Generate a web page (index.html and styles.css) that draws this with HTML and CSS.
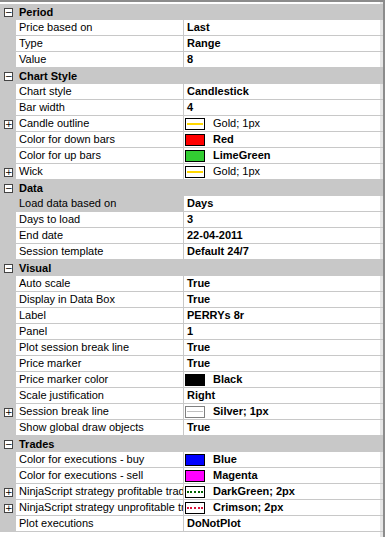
FILE: index.html
```html
<!DOCTYPE html>
<html lang="en">
<head>
  <meta charset="UTF-8" />
  <title>Properties</title>
  <link rel="stylesheet" href="styles.css">
</head>
<body>
<div class="grid">

  <div class="cat"><span class="box">&minus;</span><span class="cat-name">Period</span></div>
  <div class="row"><span class="gut"></span><span class="lbl">Price based on</span><span class="val">Last</span></div>
  <div class="row"><span class="gut"></span><span class="lbl">Type</span><span class="val">Range</span></div>
  <div class="row"><span class="gut"></span><span class="lbl">Value</span><span class="val">8</span></div>

  <div class="cat"><span class="box">&minus;</span><span class="cat-name">Chart Style</span></div>
  <div class="row"><span class="gut"></span><span class="lbl">Chart style</span><span class="val">Candlestick</span></div>
  <div class="row"><span class="gut"></span><span class="lbl">Bar width</span><span class="val">4</span></div>
  <div class="row"><span class="gut"><span class="box">+</span></span><span class="lbl">Candle outline</span><span class="val"><span class="sw line gold"></span><span class="plain">Gold; 1px</span></span></div>
  <div class="row"><span class="gut"></span><span class="lbl">Color for down bars</span><span class="val"><span class="sw red"></span>Red</span></div>
  <div class="row"><span class="gut"></span><span class="lbl">Color for up bars</span><span class="val"><span class="sw lime"></span>LimeGreen</span></div>
  <div class="row"><span class="gut"><span class="box">+</span></span><span class="lbl">Wick</span><span class="val"><span class="sw line gold"></span><span class="plain">Gold; 1px</span></span></div>

  <div class="cat"><span class="box">&minus;</span><span class="cat-name">Data</span></div>
  <div class="row"><span class="gut"></span><span class="lbl selected">Load data based on</span><span class="val">Days</span></div>
  <div class="row"><span class="gut"></span><span class="lbl">Days to load</span><span class="val">3</span></div>
  <div class="row"><span class="gut"></span><span class="lbl">End date</span><span class="val">22-04-2011</span></div>
  <div class="row"><span class="gut"></span><span class="lbl">Session template</span><span class="val">Default 24/7</span></div>

  <div class="cat"><span class="box">&minus;</span><span class="cat-name">Visual</span></div>
  <div class="row"><span class="gut"></span><span class="lbl">Auto scale</span><span class="val">True</span></div>
  <div class="row"><span class="gut"></span><span class="lbl">Display in Data Box</span><span class="val">True</span></div>
  <div class="row"><span class="gut"></span><span class="lbl">Label</span><span class="val">PERRYs 8r</span></div>
  <div class="row"><span class="gut"></span><span class="lbl">Panel</span><span class="val">1</span></div>
  <div class="row"><span class="gut"></span><span class="lbl">Plot session break line</span><span class="val">True</span></div>
  <div class="row"><span class="gut"></span><span class="lbl">Price marker</span><span class="val">True</span></div>
  <div class="row"><span class="gut"></span><span class="lbl">Price marker color</span><span class="val"><span class="sw black"></span>Black</span></div>
  <div class="row"><span class="gut"></span><span class="lbl">Scale justification</span><span class="val">Right</span></div>
  <div class="row"><span class="gut"><span class="box">+</span></span><span class="lbl">Session break line</span><span class="val"><span class="sw line silver"></span>Silver; 1px</span></div>
  <div class="row"><span class="gut"></span><span class="lbl">Show global draw objects</span><span class="val">True</span></div>

  <div class="cat"><span class="box">&minus;</span><span class="cat-name">Trades</span></div>
  <div class="row"><span class="gut"></span><span class="lbl">Color for executions - buy</span><span class="val"><span class="sw blue"></span>Blue</span></div>
  <div class="row"><span class="gut"></span><span class="lbl">Color for executions - sell</span><span class="val"><span class="sw magenta"></span>Magenta</span></div>
  <div class="row"><span class="gut"><span class="box">+</span></span><span class="lbl">NinjaScript strategy profitable trades</span><span class="val"><span class="sw dots darkgreen"></span>DarkGreen; 2px</span></div>
  <div class="row"><span class="gut"><span class="box">+</span></span><span class="lbl">NinjaScript strategy unprofitable trades</span><span class="val"><span class="sw dots crimson"></span>Crimson; 2px</span></div>
  <div class="row"><span class="gut"></span><span class="lbl">Plot executions</span><span class="val">DoNotPlot</span></div>

</div>
</body>
</html>
```

FILE: styles.css
```css
html, body {
  margin: 0;
  background: #fff;
}
body {
  font-family: "Liberation Sans", Arial, sans-serif;
  font-size: 11px;
  color: #000;
}
.grid {
  width: 383px;
  height: 533px;
  border-top: 2px solid #8c8c8c;
  border-right: 2px solid #8c8c8c;
  padding-top: 2px;
  background: #fff;
  box-shadow: inset -3px 0 0 #e6e6e6;
  overflow: hidden;
}
.cat, .row {
  display: grid;
  grid-template-columns: 16px 168px 1fr;
  height: 16px;
  width: 383px;
}
.cat {
  grid-template-columns: 16px 1fr;
  background: #c8c8c8;
  align-items: center;
}
.cat-name {
  font-weight: bold;
  padding-left: 3px;
  line-height: 16px;
}
.gut {
  background: #c8c8c8;
  display: flex;
  align-items: center;
}
.box {
  box-sizing: border-box;
  width: 9px;
  height: 9px;
  margin-left: 4px;
  border: 1px solid #444;
  background: #fff;
  font-size: 9px;
  line-height: 6px;
  text-align: center;
  color: #000;
  font-family: "DejaVu Sans", sans-serif;
  overflow: hidden;
}
.lbl, .val {
  box-sizing: border-box;
  line-height: 15px;
  height: 16px;
  border-bottom: 1px solid #c8c8c8;
  white-space: nowrap;
  overflow: hidden;
}
.lbl {
  padding-left: 3px;
  border-right: 1px solid #c8c8c8;
}
.lbl.selected {
  background: #c8c8c8;
}
.val {
  padding-left: 3px;
  font-weight: bold;
  display: flex;
  align-items: center;
}
.plain {
  font-weight: normal;
}
.sw {
  box-sizing: border-box;
  width: 20px;
  height: 12px;
  border: 1px solid #000;
  margin-left: -2px;
  margin-right: 8px;
  flex: none;
  position: relative;
  background: #fff;
}
.red { background: #ff0000; }
.lime { background: #32cd32; }
.black { background: #000; }
.blue { background: #0000ff; }
.magenta { background: #ff00ff; }
.line::after, .dots::after {
  content: "";
  position: absolute;
  left: 1px;
  right: 1px;
  top: 4px;
  height: 2px;
}
.gold::after { background: #ffd700; }
.silver { border-color: #808080; }
.silver::after { background: #c0c0c0; top: 4px; height: 1px; }
.dots::after {
  height: 0;
  border-top: 2px dotted;
}
.darkgreen::after { border-top-color: #006400; }
.crimson::after { border-top-color: #dc143c; }
```
